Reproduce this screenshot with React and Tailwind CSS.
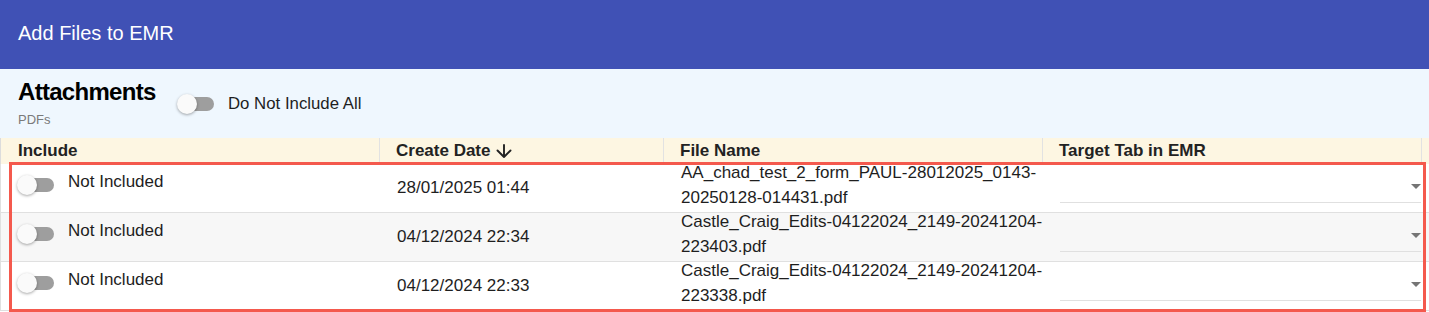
import { useState } from "react";

const ATTACHMENTS = [
  {
    id: 1,
    createdAt: "28/01/2025 01:44",
    fileName: ["AA_chad_test_2_form_PAUL-28012025_0143-", "20250128-014431.pdf"],
  },
  {
    id: 2,
    createdAt: "04/12/2024 22:34",
    fileName: ["Castle_Craig_Edits-04122024_2149-20241204-", "223403.pdf"],
  },
  {
    id: 3,
    createdAt: "04/12/2024 22:33",
    fileName: ["Castle_Craig_Edits-04122024_2149-20241204-", "223338.pdf"],
  },
];

const Switch = ({ checked, onChange }) => (
  <button
    type="button"
    onClick={onChange}
    className="relative h-[20px] w-[37px] shrink-0"
    aria-pressed={checked}
  >
    <span className="absolute left-[3px] top-[3px] h-[14px] w-[34px] rounded-full bg-[#9e9e9e]" />
    <span
      className={
        checked
          ? "absolute left-[17px] top-0 h-[20px] w-[20px] rounded-full bg-[#3f51b5] shadow-[0_1px_3px_rgba(0,0,0,0.35)]"
          : "absolute left-0 top-0 h-[20px] w-[20px] rounded-full bg-[#fafafa] shadow-[0_1px_3px_rgba(0,0,0,0.35)]"
      }
    />
  </button>
);

const SortDownIcon = () => (
  <svg width="16" height="14" viewBox="0 0 16 14" className="ml-[5px]" fill="none">
    <path d="M8 1v12M1.5 6.5 8 13l6.5-6.5" stroke="#222" strokeWidth="1.9" strokeLinecap="round" strokeLinejoin="round" />
  </svg>
);

export default function App() {
  const [included, setIncluded] = useState({});
  const [allOff, setAllOff] = useState(false);

  const toggle = (id) => setIncluded((prev) => ({ ...prev, [id]: !prev[id] }));

  return (
    <div className="relative h-[312px] w-[1429px] overflow-hidden bg-white font-['Liberation_Sans',Arial,sans-serif] text-[#1e1e1e]">
      <header className="flex h-[69px] items-center bg-[#4051b5] px-[18px] pb-[2px]">
        <h1 className="text-[20px] leading-[23px] text-white">Add Files to EMR</h1>
      </header>

      <section className="flex h-[69px] bg-[#eff7fe]">
        <div className="w-[177px] pl-[18px] pt-[9px]">
          <h2 className="text-[24px] font-bold leading-[28px] tracking-[-0.7px] text-black">Attachments</h2>
          <p className="mt-[6px] text-[13px] leading-[15px] text-[#7a7a7a]">PDFs</p>
        </div>
        <label className="flex items-center pt-[1px]">
          <Switch checked={allOff} onChange={() => setAllOff(!allOff)} />
          <span className="ml-[14px] text-[16.8px] leading-[20px]">Do Not Include All</span>
        </label>
      </section>

      <div className="flex h-[26px] items-center border-l border-[#dcdcdc] bg-[#fdf6e2] pb-[1px] text-[17px] font-bold leading-[20px] text-[#222]">
        <div className="flex h-full w-[379px] items-center border-r border-[#e2e2e2] pl-[17px]">Include</div>
        <div className="flex h-full w-[284px] items-center border-r border-[#e2e2e2] pl-[16px]">
          Create Date
          <SortDownIcon />
        </div>
        <div className="flex h-full w-[379px] items-center border-r border-[#e2e2e2] pl-[16px]">File Name</div>
        <div className="flex h-full w-[379px] items-center border-r border-[#e2e2e2] pl-[16px]">Target Tab in EMR</div>
      </div>

      {ATTACHMENTS.map((item, index) => (
        <div
          key={item.id}
          className={
            index % 2 === 1
              ? "flex h-[49px] border-b border-l border-[#e0e0e0] bg-[#f7f7f7] text-[17px]"
              : "flex h-[49px] border-b border-l border-[#e0e0e0] bg-white text-[17px]"
          }
        >
          <div className="flex w-[379px] items-start pl-[16px]">
            <div className="mt-[11px]">
              <Switch checked={!!included[item.id]} onChange={() => toggle(item.id)} />
            </div>
            <span className="ml-[14px] mt-[8px] leading-[20px]">
              {included[item.id] ? "Included" : "Not Included"}
            </span>
          </div>
          <div className="flex w-[284px] items-center pl-[17px] leading-[20px]">{item.createdAt}</div>
          <div className="w-[379px] whitespace-nowrap pl-[17px] leading-[25px] -mt-[4px]">
            {item.fileName[0]}
            <br />
            {item.fileName[1]}
          </div>
          <div className="w-[378px] pl-[17px] pt-[7px]">
            <div className="flex h-[32px] items-center justify-end border-b border-[#e0e0e0]">
              <svg width="10" height="5" viewBox="0 0 10 5">
                <path d="M0 0h10L5 5z" fill="#757575" />
              </svg>
            </div>
          </div>
        </div>
      ))}

      <div className="pointer-events-none absolute left-[9px] top-[162px] h-[150px] w-[1417px] border-[3px] border-[#f4594d]" />
    </div>
  );
}
